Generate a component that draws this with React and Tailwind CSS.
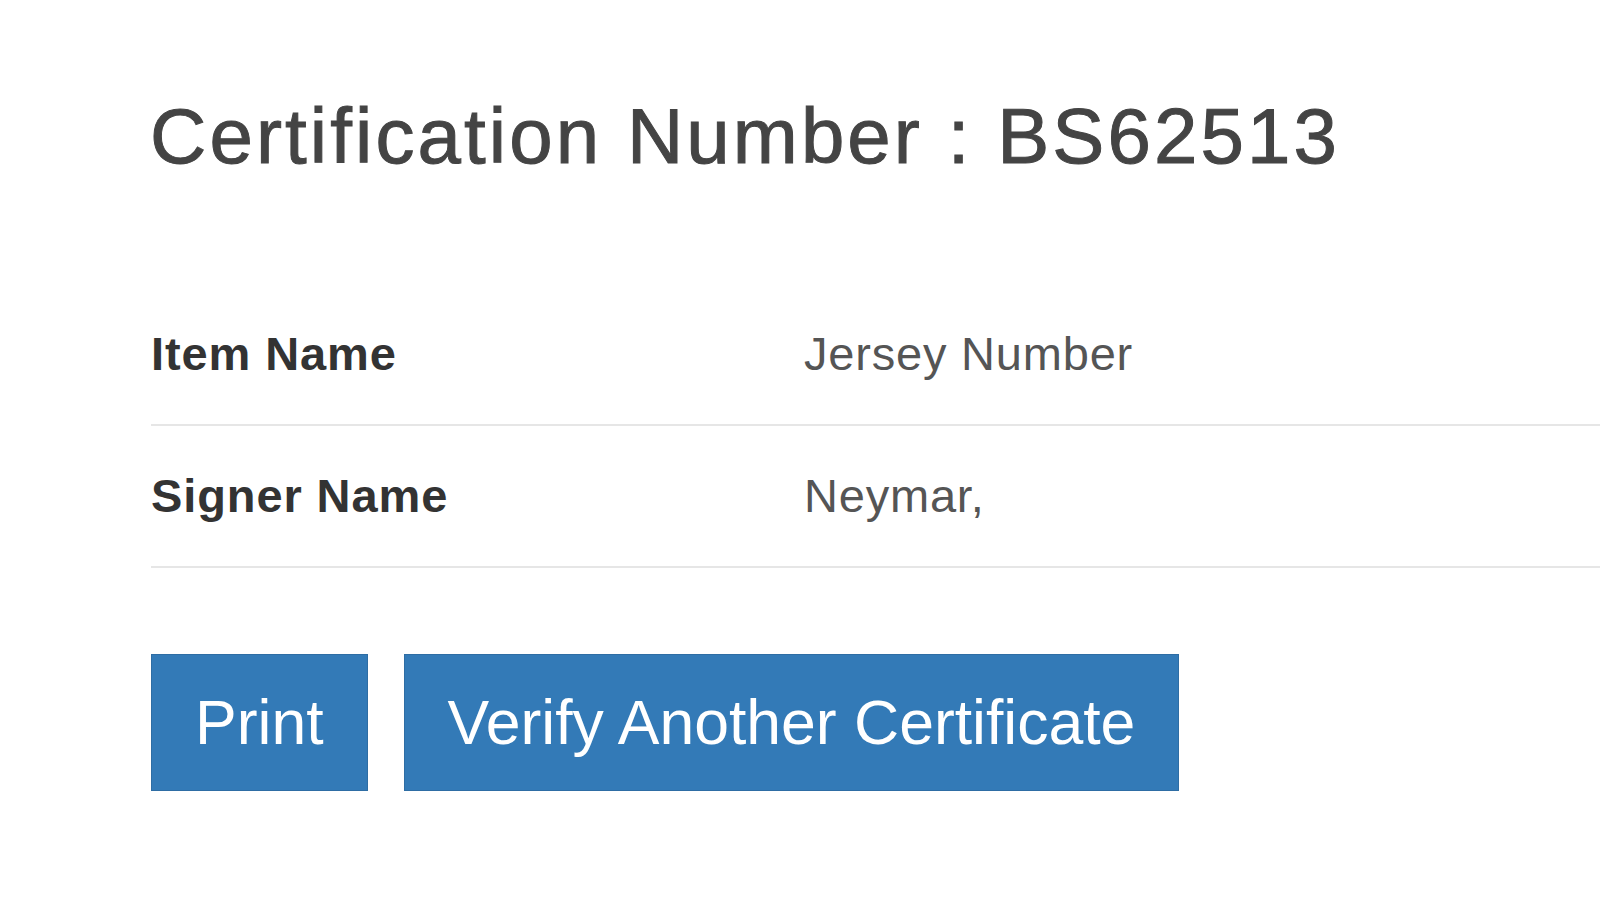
export default function App() {
  const rows = [
    { label: "Item Name", value: "Jersey Number" },
    { label: "Signer Name", value: "Neymar," },
  ];
  return (
    <div className="min-h-[907px] w-full bg-white pl-[151px] pt-[97px] font-['Liberation_Sans',Arial,sans-serif]">
      <h1 className="-ml-[1px] whitespace-nowrap text-[78px] leading-none tracking-[3.1px] text-[#444] [-webkit-text-stroke:1px_#444]">
        Certification Number : BS62513
      </h1>
      <div className="mt-[109px]">
        {rows.map((r) => (
          <div
            key={r.label}
            className="flex items-baseline border-b-2 border-[#e6e6e6] pt-[46px] pb-[47px]"
          >
            <div className="w-[653px] text-[47px] font-bold leading-none tracking-[0.9px] text-[#333]">
              {r.label}
            </div>
            <div className="text-[47px] leading-none tracking-[0.8px] text-[#555]">
              {r.value}
            </div>
          </div>
        ))}
      </div>
      <div className="mt-[86px] flex gap-[36px]">
        <button className="flex h-[137px] items-center border border-[#2e6da4] bg-[#337ab7] px-[43px] text-[62.5px] leading-none text-white">
          Print
        </button>
        <button className="flex h-[137px] items-center border border-[#2e6da4] bg-[#337ab7] px-[43px] text-[62.5px] leading-none text-white">
          Verify Another Certificate
        </button>
      </div>
    </div>
  );
}
